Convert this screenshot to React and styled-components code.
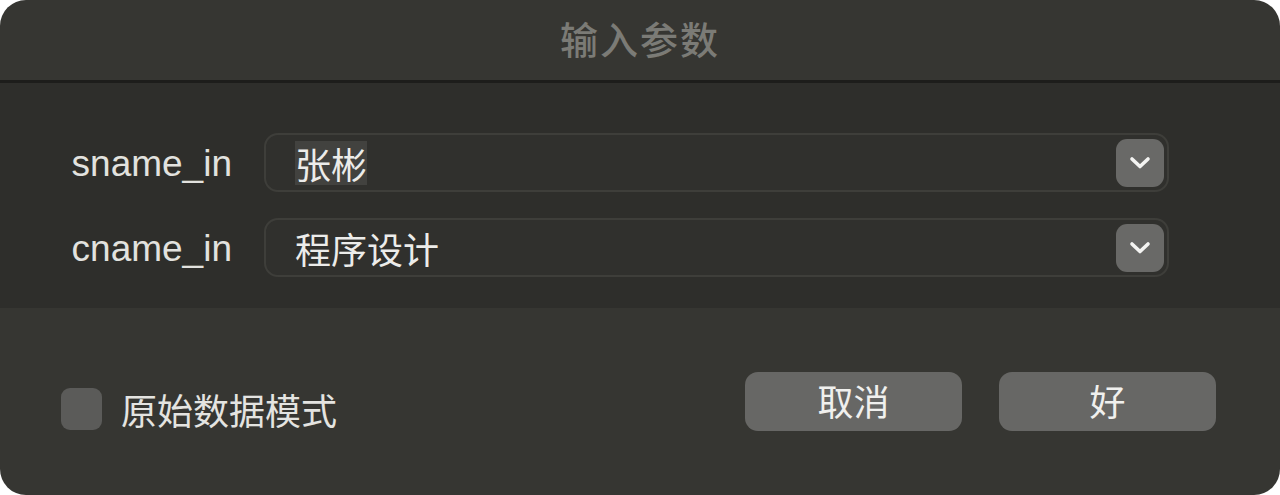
import styled, { createGlobalStyle } from "styled-components";

const GlobalStyle = createGlobalStyle`
  html, body {
    margin: 0;
    padding: 0;
    background: #ffffff;
  }
  body {
    font-family: "Liberation Sans", "Noto Sans CJK SC", sans-serif;
  }
`;

const Dialog = styled.div`
  width: 1280px;
  height: 495px;
  border-radius: 26px;
  overflow: hidden;
  background: #363632;
  display: flex;
  flex-direction: column;
`;

const TitleBar = styled.div`
  height: 83px;
  box-sizing: border-box;
  padding-bottom: 6px;
  display: flex;
  align-items: center;
  justify-content: center;
  border-bottom: 3px solid #1d1d1b;
  font-family: "Noto Sans CJK SC", sans-serif;
  font-size: 38px;
  font-weight: 500;
  color: #7b7b76;
  letter-spacing: 2px;
`;

const Form = styled.div`
  background: #2e2e2b;
  padding: 50px 111px 31px 60px;
  display: grid;
  grid-template-columns: 172px 1fr;
  column-gap: 32px;
  row-gap: 26px;
  align-items: center;
`;

const Label = styled.div`
  text-align: right;
  font-size: 37px;
  color: #e2e2df;
  padding-top: 3px;
`;

const Select = styled.div`
  height: 59px;
  box-sizing: border-box;
  border: 2px solid #3e3e3a;
  border-radius: 14px;
  background: #30302d;
  display: flex;
  align-items: center;
  justify-content: space-between;
  padding: 0 3px 0 29px;
`;

const Value = styled.span`
  font-family: "Noto Sans CJK SC", sans-serif;
  font-size: 36px;
  line-height: 44px;
  color: #ececea;
  background: ${(p) => (p.selected ? "#42423f" : "transparent")};
`;

const Chevron = styled.div`
  width: 48px;
  height: 48px;
  border-radius: 11px;
  background: #696967;
  display: flex;
  align-items: center;
  justify-content: center;
`;

const Footer = styled.div`
  flex: 1;
  display: flex;
  align-items: center;
  justify-content: space-between;
  padding: 0 64px 0 61px;
`;

const CheckRow = styled.label`
  display: flex;
  align-items: center;
  gap: 19px;
  margin-top: 14px;
`;

const Box = styled.div`
  width: 41px;
  height: 42px;
  border-radius: 9px;
  background: #5b5b59;
`;

const CheckText = styled.span`
  font-family: "Noto Sans CJK SC", sans-serif;
  font-size: 36px;
  color: #e4e4e1;
`;

const Buttons = styled.div`
  display: flex;
  gap: 37px;
`;

const Button = styled.button`
  width: 217px;
  height: 59px;
  border: none;
  border-radius: 13px;
  background: #676765;
  font-family: "Noto Sans CJK SC", sans-serif;
  font-size: 36px;
  color: #f0f0ee;
  padding: 0;
  padding-bottom: 4px;
`;

const ChevronIcon = () => (
  <svg width="24" height="16" viewBox="0 0 24 16">
    <path
      d="M4 4 L12 11.5 L20 4"
      fill="none"
      stroke="#f4f4f2"
      strokeWidth="3.6"
      strokeLinecap="round"
      strokeLinejoin="round"
    />
  </svg>
);

const fields = [
  { name: "sname_in", value: "张彬", selected: true },
  { name: "cname_in", value: "程序设计", selected: false },
];

const App = () => {
  return (
    <>
      <GlobalStyle />
      <Dialog>
        <TitleBar>输入参数</TitleBar>
        <Form>
          {fields.map((f) => (
            <>
              <Label key={f.name + "l"}>{f.name}</Label>
              <Select key={f.name + "s"}>
                <Value selected={f.selected}>{f.value}</Value>
                <Chevron>
                  <ChevronIcon />
                </Chevron>
              </Select>
            </>
          ))}
        </Form>
        <Footer>
          <CheckRow>
            <Box />
            <CheckText>原始数据模式</CheckText>
          </CheckRow>
          <Buttons>
            <Button>取消</Button>
            <Button>好</Button>
          </Buttons>
        </Footer>
      </Dialog>
    </>
  );
};

export default App;
